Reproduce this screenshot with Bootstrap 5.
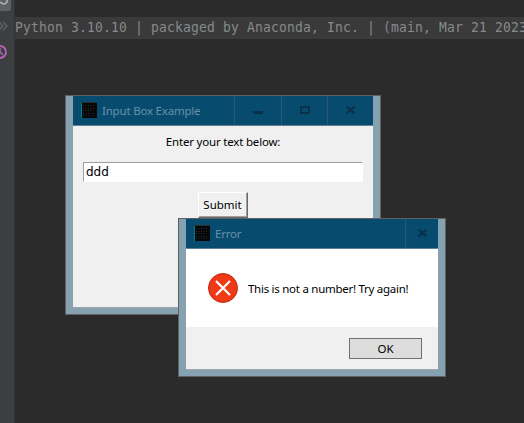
<!DOCTYPE html>
<html lang="en"><head><meta charset="utf-8"><title>Input Box Example</title>
<link href="https://cdn.jsdelivr.net/npm/bootstrap@5.3.0/dist/css/bootstrap.min.css" rel="stylesheet">
<style>
body{background:#2b2b2b;font-family:"Noto Sans","Open Sans",sans-serif;font-size:11.5px;line-height:16px;color:#000;width:524px;height:423px}
.gutter{width:15px;background:#3c3f41;border-right:1px solid #323334;flex:none}
.console-line{margin-top:17px;height:22px;background:#3a3a3a;color:#868a8c;font:13px/22px "DejaVu Sans Mono",monospace;letter-spacing:.174px;white-space:pre}
.console-line span{display:inline-block;transform:scaleY(1.12);transform-origin:50% 75%}
.win{position:absolute;border:1px solid #5f6066;background:#86a1b0;padding:0 7px 6px}
.win-main{left:65px;top:95px;width:316px;height:220px}
.win-error{left:178px;top:218px;width:268px;height:159px}
.titlebar{height:30px;background:#074b6f;border-bottom:1px solid #5f8095;color:#6791a9;flex:none}
.titlebar svg{flex:none}
.app-icon{margin-top:-1px}
.caption-text{margin-left:5px;letter-spacing:-.2px}
.ctl{border-left:1px solid #2b5676;height:29px}
.ctl svg{display:block}
.client{background:#f0f0f0;border-bottom:1px solid #a0a5ac}
.prompt{letter-spacing:-.19px}
.entry{width:280px;height:20px;background:#fff;border:1px solid #a0a0a0;border-right-color:#fff;border-bottom-color:#fff;font-family:"DejaVu Sans",sans-serif;font-size:12px;line-height:19px;padding-left:2px;margin:12px 0 0 10px}
.submit{width:50px;height:26px;border:1px solid;border-color:#fff #696969 #696969 #fff;background:#f0f0f0;box-shadow:inset -1px -1px #a0a0a0;margin:10px 1px 0 0;padding:0;line-height:24px}
.message{height:78px;background:#fff;padding-left:22px}
.message-text{margin:2px 0 0 10px;letter-spacing:-.27px}
.ok{width:73px;height:21px;border:1px solid #707070;background:#ddd;padding:0;line-height:20px;margin:11px 16px 0 0}
</style>
<script src="https://cdn.jsdelivr.net/npm/bootstrap@5.3.0/dist/js/bootstrap.bundle.min.js"></script>
</head><body class="d-flex overflow-hidden position-relative">
<div class="gutter"><svg class="d-block" width="14" height="64"><path d="M0 0H11V9Q11 11 9 11H0Z" fill="#5c6164"/><path d="M0 2Q4 6 7 2V0" fill="none" stroke="#afb1b3" stroke-width="1.6"/><path d="M-1 22L3 26L-1 30M3 22L7 26L3 30" fill="none" stroke="#606366" stroke-width="1.3"/><circle cx="0" cy="52" r="6" fill="none" stroke="#b363b8" stroke-width="1.8"/><path d="M0 48V52L3 55" fill="none" stroke="#b363b8" stroke-width="1.5"/></svg></div>
<div class="flex-grow-1 overflow-hidden"><div class="console-line"><span>Python 3.10.10 | packaged by Anaconda, Inc. | (main, Mar 21 2023</span></div></div>

<section class="win win-main d-flex flex-column">
<div class="titlebar d-flex align-items-center ps-2"><svg class="app-icon" width="16" height="16"><use href="#app"/></svg><span class="caption-text">Input Box Example</span>
<div class="ctl ms-auto"><svg width="46" height="29"><path d="M18 15h10v3H18z" fill="#08314a"/></svg></div>
<div class="ctl"><svg width="45" height="29"><path d="M19 11h8v6h-8z" fill="none" stroke="#08314a" stroke-width="2"/></svg></div>
<div class="ctl"><svg width="45" height="29"><path d="M18.5 10.5L26.5 17.5M26.5 10.5L18.5 17.5" stroke="#08314a" stroke-width="2.3"/></svg></div></div>
<div class="client flex-grow-1 d-flex flex-column"><div class="text-center pt-2"><span class="prompt">Enter your text below:</span></div><div class="entry">ddd</div><button class="submit align-self-center">Submit</button></div>
</section>

<section class="win win-error d-flex flex-column">
<div class="titlebar d-flex align-items-center ps-2"><svg class="app-icon" width="16" height="16"><use href="#app"/></svg><span class="caption-text">Error</span><div class="ctl ms-auto"><svg width="32" height="29"><path d="M12.5 10.5L20.5 17.5M20.5 10.5L12.5 17.5" stroke="#08314a" stroke-width="2.3"/></svg></div></div>
<div class="message d-flex align-items-center"><svg width="30" height="30"><circle cx="15" cy="15" r="14.5" fill="#f03a17" stroke="#b92d14"/><path d="M8 8L22 22M22 8L8 22" stroke="#fff" stroke-width="2.2"/></svg><span class="message-text">This is not a number! Try again!</span></div>
<div class="client flex-grow-1 d-flex justify-content-end align-items-start"><button class="ok">OK</button></div>
</section>
<svg width="0" height="0" class="position-absolute"><symbol id="app" viewBox="0 0 16 16"><path d="M0 0h16v16H0z" fill="#050708"/><path d="M0 0h16v1H0z" fill="#2b2f31"/><path d="M0 1h1v15H0z" fill="#087a86"/><g fill="none" stroke-dasharray="1 1.5"><path d="M2 3.5h12M2 13.5h12" stroke="#24262c"/><path d="M2 6.5h11" stroke="#4a2024"/><path d="M2 8.5h9" stroke="#1d3a2e"/><path d="M2 11.5h12" stroke="#3a2230"/></g></symbol></svg>
</body></html>
